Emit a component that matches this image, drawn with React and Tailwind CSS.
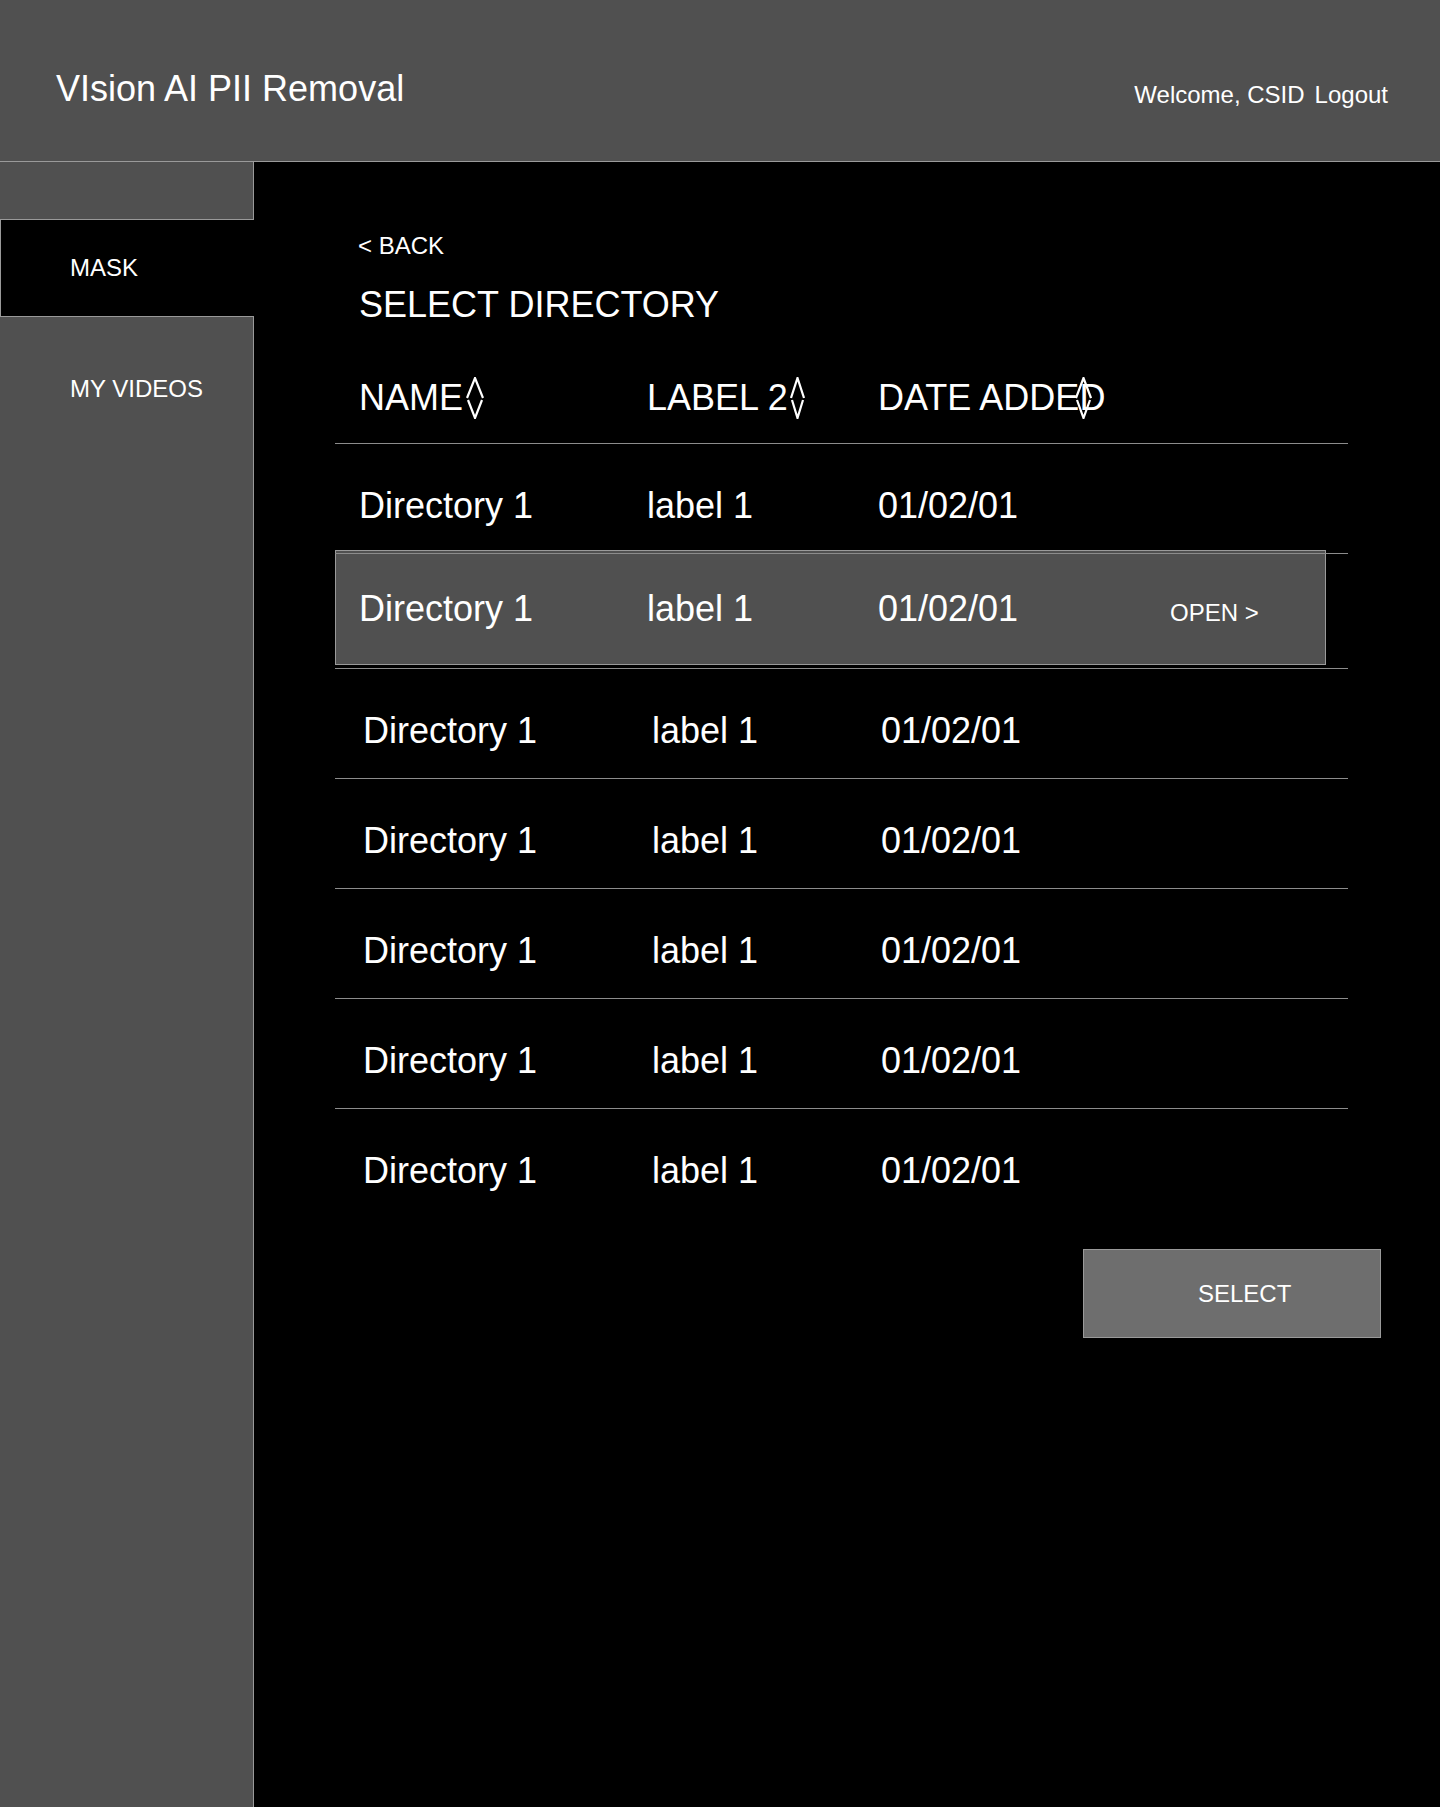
import React from "react";

function SortIcon({ w = 18 }) {
  const m = w / 2;
  return (
    <svg width={w} height="42" viewBox={`0 0 ${w} 42`} fill="none" stroke="white" strokeWidth="2.2" strokeLinejoin="miter">
      <path d={`M1 21 L${m} 1 L${w - 1} 21`} />
      <path d={`M2 23 L${m} 41 L${w - 2} 23`} />
    </svg>
  );
}

const rowsAfter = [1, 2, 3, 4, 5];

export default function App() {
  return (
    <div className="min-h-screen w-full flex flex-col bg-black text-white font-['Liberation_Sans',Arial,sans-serif]">
      <header className="h-[162px] shrink-0 bg-[#505050] border-b border-[#9a9a9a] flex justify-between pl-[56px] pr-[52px]">
        <div className="pt-[69px] text-[36px] leading-[40px]">VIsion AI PII Removal</div>
        <div className="pt-[81px] text-[24px] leading-[28px] flex">
          <span>Welcome, CSID</span>
          <span className="ml-[10px]">Logout</span>
        </div>
      </header>
      <div className="flex flex-1">
        <aside className="w-[254px] shrink-0 flex flex-col">
          <div className="h-[57px] bg-[#505050] border-r border-[#9a9a9a]"></div>
          <div className="h-[98px] bg-black border-y border-l border-[#9a9a9a] flex items-center pl-[69px] text-[24px] leading-[28px]">
            MASK
          </div>
          <div className="flex-1 bg-[#505050] border-r border-[#9a9a9a] pl-[70px] pt-[58px] text-[24px] leading-[28px]">
            MY VIDEOS
          </div>
        </aside>
        <main className="flex-1 flex flex-col pl-[81px] pr-[59px] pt-[70px]">
          <div className="pl-[23px] text-[24px] leading-[28px]">&lt; BACK</div>
          <div className="pl-[24px] mt-[25px] text-[36px] leading-[40px]">SELECT DIRECTORY</div>
          <div className="w-[1013px] mt-[25px] flex flex-col">
            <div className="h-[94px] border-b border-[#8c8c8c] flex items-center pt-[2px] pl-[24px] text-[36px] leading-[42px]">
              <div className="w-[288px] flex items-center">
                <span>NAME</span>
                <span className="ml-[3px]"><SortIcon w={18} /></span>
              </div>
              <div className="w-[231px] flex items-center">
                <span>LABEL 2</span>
                <span className="ml-[2px]"><SortIcon w={15} /></span>
              </div>
              <div className="relative flex items-center">
                <span>DATE ADDED</span>
                <span className="absolute left-[197px] top-0"><SortIcon w={17} /></span>
              </div>
            </div>
            <div className="relative z-10 h-[110px] border-b border-[#8c8c8c] flex items-center pt-[15px] pl-[24px] text-[36px] leading-[42px]">
              <div className="w-[288px]">Directory 1</div>
              <div className="w-[231px]">label 1</div>
              <div>01/02/01</div>
            </div>
            <div className="-mt-[4px] h-[119px] border-b border-[#8c8c8c] pb-[4px]">
              <div className="w-[991px] h-[115px] bg-[#505050] border border-[#9a9a9a] flex items-center pl-[23px] pt-[2px]">
                <div className="flex items-baseline">
                  <div className="w-[288px] text-[36px] leading-[42px]">Directory 1</div>
                  <div className="w-[231px] text-[36px] leading-[42px]">label 1</div>
                  <div className="w-[292px] text-[36px] leading-[42px]">01/02/01</div>
                  <div className="text-[24px] leading-[28px]">OPEN &gt;</div>
                </div>
              </div>
            </div>
            {rowsAfter.map((r, i) => (
              <div
                key={r}
                className={
                  i < rowsAfter.length - 1
                    ? "h-[110px] border-b border-[#8c8c8c] flex items-center pt-[14px] pl-[28px] text-[36px] leading-[42px]"
                    : "h-[110px] flex items-center pt-[14px] pl-[28px] text-[36px] leading-[42px]"
                }
              >
                <div className="w-[289px]">Directory 1</div>
                <div className="w-[229px]">label 1</div>
                <div>01/02/01</div>
              </div>
            ))}
          </div>
          <div className="self-end mt-[30px] w-[298px] h-[89px] bg-[#6e6e6e] border border-[#9a9a9a] flex items-center pl-[114px] text-[24px] leading-[28px]">
            SELECT
          </div>
        </main>
      </div>
    </div>
  );
}
